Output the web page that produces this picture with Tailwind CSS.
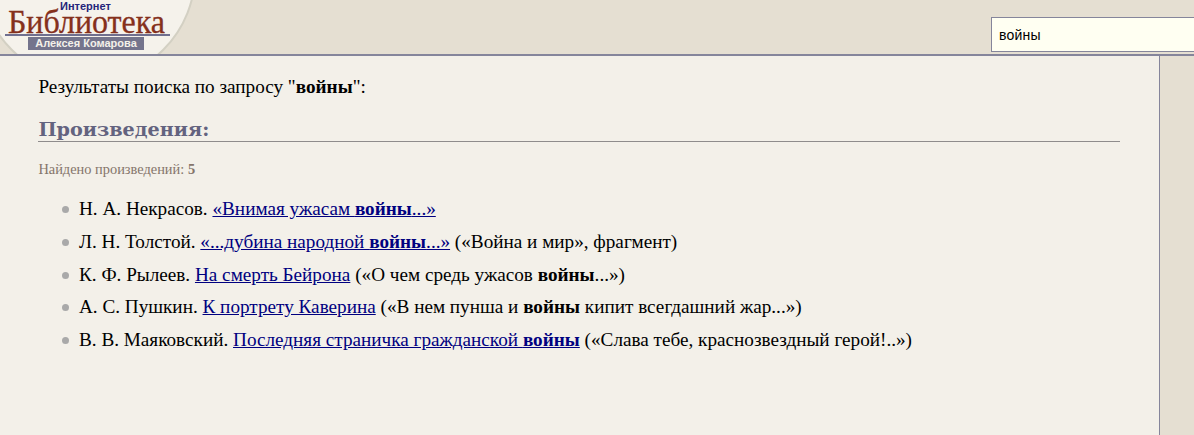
<!DOCTYPE html>
<html lang="ru">
<head>
  <meta charset="UTF-8">
  <title>Интернет Библиотека Алексея Комарова</title>
  <script src="https://cdn.jsdelivr.net/npm/@tailwindcss/browser@4"></script>
</head>
<body class="h-[435px] overflow-hidden bg-[#f3f0e9] font-['Liberation_Serif',serif] text-[19.2px] text-black">

  <!-- Header -->
  <header class="relative flex h-[56px] justify-between overflow-hidden border-b-2 border-[#85859b] bg-[#e5dfd2]">
    <div class="absolute left-[-21px] top-[-135px] size-[217px] rounded-full border-2 border-[#d3d0c3] bg-[radial-gradient(circle_at_50%_62%,#f5f2eb_60%,#e3dfd2_100%)]"></div>

    <!-- Logo -->
    <a href="#" class="relative ml-[5px] block h-[50px] w-[165px]">
      <span class="block h-[8px] pl-[55px] font-['Liberation_Sans',sans-serif] text-[11px] leading-[13px] font-bold text-[#25257a]">Интернет</span>
      <span class="block h-[26px] origin-left scale-x-[0.97] pl-[3px] text-[33px] leading-[28px] whitespace-nowrap text-[#85301c] [-webkit-text-stroke:0.3px_#85301c]">Библиотека</span>
      <span class="block h-[2px] bg-[#6f6f8f]"></span>
      <span class="mt-[1px] ml-[23px] block h-[13px] w-[116px] bg-[#74748c] text-center font-['Liberation_Sans',sans-serif] text-[11px] leading-[13px] font-bold text-[#f3f0e9]">Алексея Комарова</span>
    </a>

    <input type="text" value="войны" class="relative mt-[17px] h-[35px] w-[203px] border border-r-0 border-[#85859b] bg-[#fffff2] px-[7px] font-['Liberation_Sans',sans-serif] text-[14px] tracking-[0.2px] text-black outline-none">
  </header>

  <div class="flex h-[379px]">
    <!-- Results -->
    <main class="w-[1159px] pt-[20px] pr-[39px] pl-[38.4px]">
      <p class="leading-[22px]">Результаты поиска по запросу "<b>войны</b>":</p>

      <h2 class="mt-[21px] border-b border-[#8f8c8c] font-['DejaVu_Serif',serif] text-[19.2px] leading-[22px] font-bold text-[#63637f]">Произведения:</h2>

      <p class="mt-[19px] text-[14.4px] leading-[17px] text-[#85756b]">Найдено произведений: <b>5</b></p>

      <ul class="mt-[15.4px] list-none">
        <li class="flex h-[32.7px] items-center"><span class="mr-[10px] ml-[23.6px] size-[7px] rounded-full bg-[#a9a9a9]"></span><span>Н. А. Некрасов. <a href="#" class="text-[#000080] underline">«Внимая ужасам <b>войны</b>...»</a></span></li>
        <li class="flex h-[32.7px] items-center"><span class="mr-[10px] ml-[23.6px] size-[7px] rounded-full bg-[#a9a9a9]"></span><span>Л. Н. Толстой. <a href="#" class="text-[#000080] underline">«...дубина народной <b>войны</b>...»</a> («Война и мир», фрагмент)</span></li>
        <li class="flex h-[32.7px] items-center"><span class="mr-[10px] ml-[23.6px] size-[7px] rounded-full bg-[#a9a9a9]"></span><span>К. Ф. Рылеев. <a href="#" class="text-[#000080] underline">На смерть Бейрона</a> («О чем средь ужасов <b>войны</b>...»)</span></li>
        <li class="flex h-[32.7px] items-center"><span class="mr-[10px] ml-[23.6px] size-[7px] rounded-full bg-[#a9a9a9]"></span><span>А. С. Пушкин. <a href="#" class="text-[#000080] underline">К портрету Каверина</a> («В нем пунша и <b>войны</b> кипит всегдашний жар...»)</span></li>
        <li class="flex h-[32.7px] items-center"><span class="mr-[10px] ml-[23.6px] size-[7px] rounded-full bg-[#a9a9a9]"></span><span>В. В. Маяковский. <a href="#" class="text-[#000080] underline">Последняя страничка гражданской <b>войны</b></a> («Слава тебе, краснозвездный герой!..»)</span></li>
      </ul>
    </main>

    <!-- Right column -->
    <aside class="flex-1 border-l border-[#85859b] bg-[#e5dfd2]"></aside>
  </div>

</body>
</html>
